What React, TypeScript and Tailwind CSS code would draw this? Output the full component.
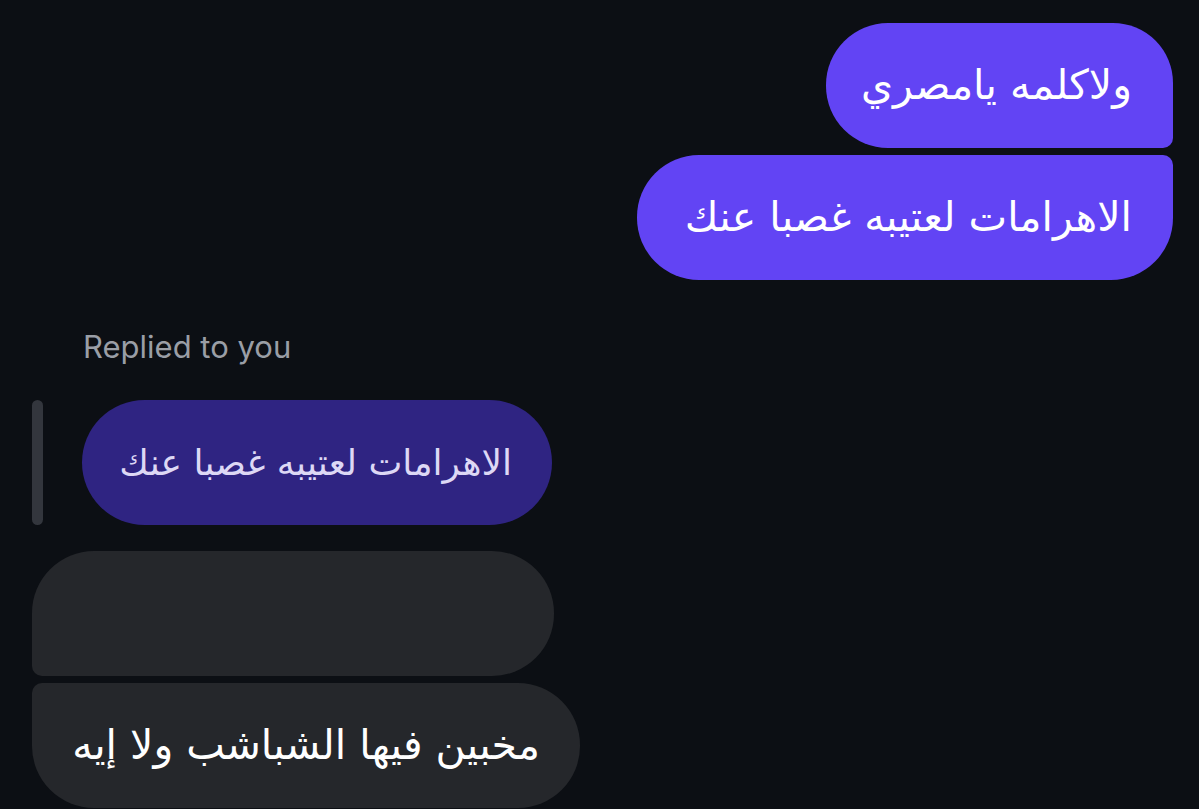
import React from 'react';

const arabic = "font-['DejaVu_Sans','Noto_Sans',sans-serif]";

const App: React.FC = () => {
    return (
        <div className="w-[1199px] h-[809px] overflow-hidden bg-[#0c0f14] font-['Inter',sans-serif]">
            <div className="flex flex-col items-end pt-[23px] pr-[26px] gap-[7px]">
                <div
                    dir="rtl"
                    className={`${arabic} h-[125px] w-[347px] flex items-center pr-[41px] text-[41px] text-white bg-[#6244f4] rounded-tr-[60px] rounded-br-[10px] rounded-l-[62px]`}
                >
                    ولاكلمه يامصري
                </div>
                <div
                    dir="rtl"
                    className={`${arabic} h-[125px] w-[536px] flex items-center pr-[41px] text-[41px] text-white bg-[#6244f4] rounded-tr-[10px] rounded-br-[62px] rounded-l-[62px]`}
                >
                    الاهرامات لعتيبه غصبا عنك
                </div>
            </div>

            <div className="pl-[83px] mt-[49px] text-[31px] leading-[36px] text-[#9a9ea6]">Replied to you</div>

            <div className="flex items-stretch pl-[32px] mt-[35px] gap-[39px]">
                <div className="w-[11px] rounded-full bg-[#33363d]"></div>
                <div
                    dir="rtl"
                    className={`${arabic} h-[125px] w-[470px] flex items-center pr-[40px] text-[36px] text-[#ddd8f5] bg-[#2f2482] rounded-full`}
                >
                    الاهرامات لعتيبه غصبا عنك
                </div>
            </div>

            <div className="flex flex-col items-start pl-[32px] mt-[26px] gap-[7px]">
                <div className="h-[125px] w-[522px] bg-[#25272b] rounded-tl-[62px] rounded-bl-[10px] rounded-r-[62px]"></div>
                <div
                    dir="rtl"
                    className={`${arabic} h-[125px] w-[548px] flex items-center pr-[40px] text-[41px] text-white bg-[#25272b] rounded-tl-[10px] rounded-bl-[62px] rounded-r-[62px]`}
                >
                    مخبين فيها الشباشب ولا إيه
                </div>
            </div>
        </div>
    );
};

export default App;
